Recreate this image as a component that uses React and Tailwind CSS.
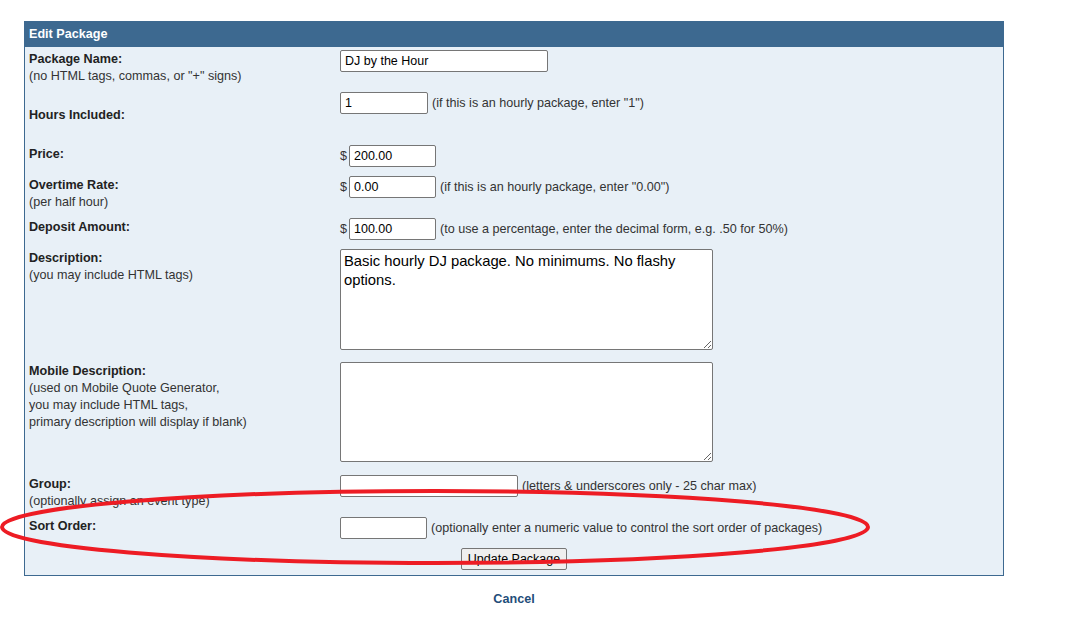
import React from 'react';

const font = { fontFamily: '"Liberation Sans", Arial, sans-serif' };

const Row = ({ h, label, sub, labelPad = 'pt-[4px]', children }) => (
  <div className={`flex ${h}`}>
    <div className={`w-[311px] shrink-0 ${labelPad}`}>
      <div className="font-bold text-[#222]">{label}</div>
      {sub && sub.map((s) => (
        <div key={s} className="text-[#333]">{s}</div>
      ))}
    </div>
    <div className="flex items-start pt-[3px]">{children}</div>
  </div>
);

const Input = ({ w, value = '' }) => (
  <input
    type="text"
    defaultValue={value}
    className={`${w} h-[22px] border border-[#767676] rounded-[2px] bg-white px-[4px] text-[12.5px] text-black outline-none`}
    style={font}
  />
);

const Note = ({ children }) => <span className="ml-[4px] leading-[22px] text-[#333]">{children}</span>;

const Money = ({ value }) => (
  <>
    <span className="leading-[22px] text-[#333] mr-[2px]">$</span>
    <Input w="w-[87px]" value={value} />
  </>
);

export default function App() {
  return (
    <div className="relative w-[1089px] h-[638px] bg-white overflow-hidden text-[12.6px] leading-[17px]" style={font}>
      <div className="pt-[21px] pl-[24px]">
        <div className="w-[980px] border border-[#3d6990] bg-[#e8f0f7]">
          <div className="h-[25px] bg-[#3d6990] px-[4px] text-white font-bold leading-[25px]">Edit Package</div>
          <div className="px-[4px]">
            <Row h="h-[42px]" label="Package Name:" sub={['(no HTML tags, commas, or "+" signs)']}>
              <Input w="w-[208px]" value="DJ by the Hour" />
            </Row>
            <Row h="h-[53px]" label="Hours Included:" labelPad="pt-[18px]">
              <Input w="w-[88px]" value="1" />
              <Note>(if this is an hourly package, enter "1")</Note>
            </Row>
            <Row h="h-[31px]" label="Price:">
              <Money value="200.00" />
            </Row>
            <Row h="h-[42px]" label="Overtime Rate:" sub={['(per half hour)']}>
              <Money value="0.00" />
              <Note>(if this is an hourly package, enter "0.00")</Note>
            </Row>
            <Row h="h-[31px]" label="Deposit Amount:">
              <Money value="100.00" />
              <Note>(to use a percentage, enter the decimal form, e.g. .50 for 50%)</Note>
            </Row>
            <Row h="h-[113px]" label="Description:" sub={['(you may include HTML tags)']}>
              <textarea
                defaultValue="Basic hourly DJ package. No minimums. No flashy options."
                className="w-[373px] h-[101px] border border-[#767676] rounded-[2px] bg-white px-[3px] py-[2px] text-[14.8px] leading-[19px] text-black outline-none resize"
                style={font}
              />
            </Row>
            <Row
              h="h-[113px]"
              label="Mobile Description:"
              sub={['(used on Mobile Quote Generator,', 'you may include HTML tags,', 'primary description will display if blank)']}
            >
              <textarea
                className="w-[373px] h-[100px] border border-[#767676] rounded-[2px] bg-white px-[3px] py-[2px] text-[14.8px] outline-none"
                style={font}
              />
            </Row>
            <Row h="h-[42px]" label="Group:" sub={['(optionally assign an event type)']}>
              <Input w="w-[178px]" />
              <Note>(letters &amp; underscores only - 25 char max)</Note>
            </Row>
            <Row h="h-[31px]" label="Sort Order:">
              <Input w="w-[87px]" />
              <Note>(optionally enter a numeric value to control the sort order of packages)</Note>
            </Row>
            <div className="flex justify-center h-[30px] pt-[3px]">
              <button
                className="h-[22px] w-[106px] border border-[#767676] rounded-[2px] bg-[#efefef] text-[12.5px] text-black"
                style={font}
              >
                Update Package
              </button>
            </div>
          </div>
        </div>
        <div className="w-[980px] pt-[15px] text-center font-bold text-[#1f4e7a]">Cancel</div>
      </div>

      {/* red annotation */}
      <svg className="absolute left-0 top-0 pointer-events-none" width="1089" height="638">
        <ellipse cx="435" cy="527" rx="433" ry="36" fill="none" stroke="#ed1c24" strokeWidth="4" />
      </svg>
    </div>
  );
}
